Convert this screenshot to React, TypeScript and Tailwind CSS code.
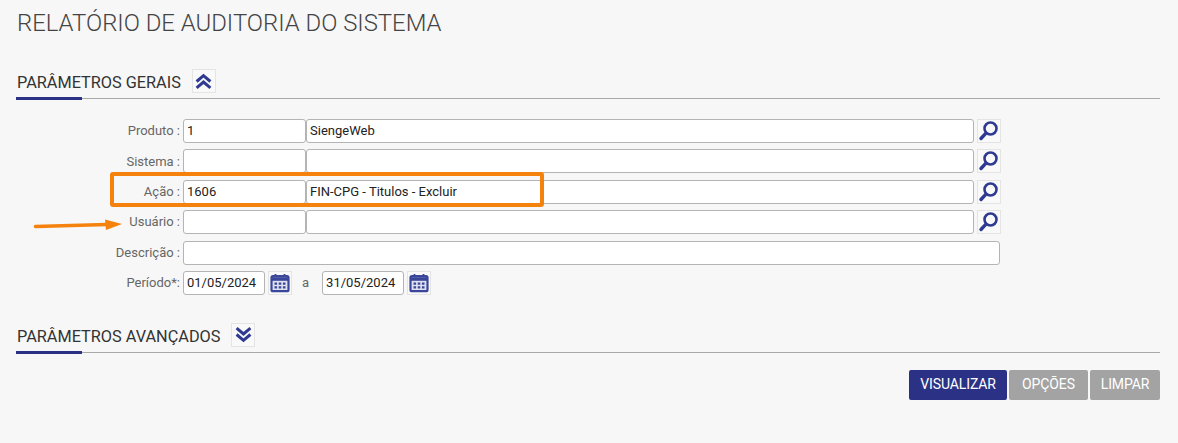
import React from "react";

const font = { fontFamily: "Roboto, sans-serif" };

function SearchIcon() {
  return (
    <svg width="22" height="22" viewBox="0 0 22 22" fill="none">
      <circle cx="12.5" cy="8.5" r="6" stroke="#2e3a92" strokeWidth="2.6" />
      <path d="M8 13.2 L3 18.5" stroke="#2e3a92" strokeWidth="3.4" strokeLinecap="round" />
    </svg>
  );
}

function CalendarIcon() {
  return (
    <svg width="20" height="20" viewBox="0 0 20 20" fill="none">
      <rect x="1.5" y="3.2" width="17" height="15" rx="1.5" fill="#dfe1f0" stroke="#3a4699" strokeWidth="2.2" />
      <path d="M1.5 6 H18.5" stroke="#3a4699" strokeWidth="3.6" />
      <path d="M5.5 1 V4 M14.5 1 V4" stroke="#3a4699" strokeWidth="1.8" />
      <path
        d="M4.5 9.5h2.6v2.2H4.5z M8.7 9.5h2.6v2.2H8.7z M12.9 9.5h2.6v2.2h-2.6z M4.5 13.2h2.6v2.2H4.5z M8.7 13.2h2.6v2.2H8.7z M12.9 13.2h2.6v2.2h-2.6z"
        fill="#3a4699"
      />
    </svg>
  );
}

function IconButton({ children }: { children: React.ReactNode }) {
  return (
    <button className="flex h-6 w-6 shrink-0 items-center justify-center border border-[#e4e4e4] bg-[#f9f9f9]">
      {children}
    </button>
  );
}

function TextBox({ value, className }: { value?: string; className: string }) {
  return (
    <div
      className={`flex h-full items-center rounded-[3px] border border-[#b4b4b4] bg-white px-[3px] text-[13px] text-[#222] ${className}`}
    >
      {value}
    </div>
  );
}

function Row({ label, children }: { label: string; children: React.ReactNode }) {
  return (
    <div className="flex h-6 items-center">
      <div className="mr-[3px] w-[163px] text-right text-[13px] text-[#666]">{label}</div>
      {children}
    </div>
  );
}

function LookupRow({ label, code, name }: { label: string; code?: string; name?: string }) {
  return (
    <Row label={label}>
      <TextBox value={code} className="w-[123px]" />
      <TextBox value={name} className="w-[668px]" />
      <div className="ml-[3px]">
        <IconButton>
          <SearchIcon />
        </IconButton>
      </div>
    </Row>
  );
}

function SectionHeader({ title, open }: { title: string; open: boolean }) {
  return (
    <div className="relative flex h-[29px] items-start border-b border-[#a8a8a8]">
      <span className="mr-[11px] pt-[2px] text-[16.3px] leading-[22px] text-[#333]">{title}</span>
      <button className="flex h-6 w-6 -translate-y-px items-center justify-center border border-[#e4e4e4] bg-[#f9f9f9]">
        <svg width="17" height="17" viewBox="0 0 16 16" fill="none" stroke="#2e3a92" strokeWidth="2.8">
          {open ? (
            <path d="M1.5 8 L8 2.5 L14.5 8 M1.5 14 L8 8.5 L14.5 14" />
          ) : (
            <path d="M1.5 2 L8 7.5 L14.5 2 M1.5 8 L8 13.5 L14.5 8" />
          )}
        </svg>
      </button>
      <div className="absolute bottom-[-2px] left-[-1px] h-[3px] w-[66px] bg-[#2b3285]" />
    </div>
  );
}

export default function App() {
  return (
    <div className="relative h-[443px] w-[1178px] overflow-hidden bg-[#f7f7f7] px-[17px]" style={font}>
      <h1 className="pt-[9px] text-[23.9px] leading-[28px] font-light text-[#444]">
        RELATÓRIO DE AUDITORIA DO SISTEMA
      </h1>

      <div className="mt-[33px] mr-[1px]">
        <SectionHeader title="PARÂMETROS GERAIS" open />
      </div>

      <div className="mt-[20px] flex flex-col gap-[6.4px]">
        <LookupRow label="Produto :" code="1" name="SiengeWeb" />
        <LookupRow label="Sistema :" />
        <LookupRow label="Ação :" code="1606" name="FIN-CPG - Titulos - Excluir" />
        <LookupRow label="Usuário :" />
        <Row label="Descrição :">
          <TextBox className="w-[817px]" />
        </Row>
        <Row label="Período*:">
          <TextBox value="01/05/2024" className="w-[82px]" />
          <div className="ml-[3px]">
            <IconButton>
              <CalendarIcon />
            </IconButton>
          </div>
          <span className="mr-[13px] ml-[10px] text-[13px] text-[#666]">a</span>
          <TextBox value="31/05/2024" className="w-[82px]" />
          <div className="ml-[3px]">
            <IconButton>
              <CalendarIcon />
            </IconButton>
          </div>
        </Row>
      </div>

      <div className="mt-[29px] mr-[1px]">
        <SectionHeader title="PARÂMETROS AVANÇADOS" open={false} />
      </div>

      <div className="mt-[17px] mr-[1px] flex justify-end gap-[2px] text-[14px] tracking-[-0.1px] text-white">
        <button className="h-[30px] w-[98px] rounded-[2px] bg-[#2b3285]">VISUALIZAR</button>
        <button className="h-[30px] w-[79px] rounded-[2px] bg-[#a3a3a3]">OPÇÕES</button>
        <button className="h-[30px] w-[70px] rounded-[2px] bg-[#a3a3a3]">LIMPAR</button>
      </div>

      {/* marcações em laranja por cima da tela */}
      <div className="absolute top-[172px] left-[110px] h-[35px] w-[434px] rounded-[3px] border-4 border-[#f5820d]" />
      <svg className="absolute top-[218px] left-[33px]" width="90" height="16" viewBox="0 0 90 16">
        <path d="M2.5 8.5 L74 6.5" stroke="#f5820d" strokeWidth="3.6" strokeLinecap="round" />
        <path d="M72 1.5 L89 6 L73 12 Z" fill="#f5820d" />
      </svg>
    </div>
  );
}
